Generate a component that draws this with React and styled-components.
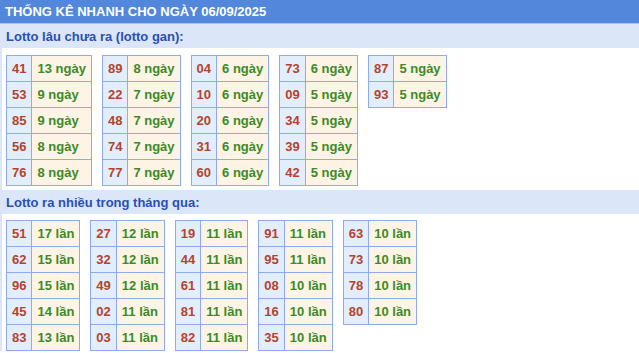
import React from "react";
import styled, { createGlobalStyle } from "styled-components";

const Global = createGlobalStyle`
  html, body { margin: 0; padding: 0; background: #fff; }
  body { font-family: "Liberation Sans", Arial, sans-serif; overflow: hidden; }
`;

const Wrap = styled.div`
  width: 639px;
  border-left: 2px solid #dbe7f8;
  box-sizing: border-box;
`;

const Title = styled.div`
  height: 23px;
  line-height: 23px;
  background: #5287dc;
  color: #fff;
  font-weight: bold;
  font-size: 13px;
  border-bottom: 1px solid #a9c3ee;
  margin-left: -2px;
  padding-left: 5px;
`;

const SectionTitle = styled.div`
  height: 24px;
  line-height: 25px;
  background: #dbe7f9;
  color: #2a4fb3;
  font-weight: bold;
  font-size: 13px;
  padding-left: 4px;
  margin-top: ${(p) => p.$top || 0}px;
`;

const Tables = styled.div`
  display: flex;
  align-items: flex-start;
  gap: ${(p) => p.$gap}px;
  padding: ${(p) => p.$pt}px 4px 0;
`;

const Table = styled.table`
  border-collapse: collapse;
  font-size: 13px;
  font-weight: bold;
`;

const Num = styled.td`
  border: 1px solid #8eabf1;
  background: #e3eefc;
  color: #b5432b;
  height: 25px;
  padding: 0 5px;
  line-height: 15px;
`;

const Val = styled.td`
  border: 1px solid #8eabf1;
  background: #fdf4e5;
  color: #3c8a27;
  height: 25px;
  padding: 0 5px;
  line-height: 15px;
  white-space: nowrap;
`;

const gan = [
  [["41", 13], ["53", 9], ["85", 9], ["56", 8], ["76", 8]],
  [["89", 8], ["22", 7], ["48", 7], ["74", 7], ["77", 7]],
  [["04", 6], ["10", 6], ["20", 6], ["31", 6], ["60", 6]],
  [["73", 6], ["09", 5], ["34", 5], ["39", 5], ["42", 5]],
  [["87", 5], ["93", 5]],
];

const nhieu = [
  [["51", 17], ["62", 15], ["96", 15], ["45", 14], ["83", 13]],
  [["27", 12], ["32", 12], ["49", 12], ["02", 11], ["03", 11]],
  [["19", 11], ["44", 11], ["61", 11], ["81", 11], ["82", 11]],
  [["91", 11], ["95", 11], ["08", 10], ["16", 10], ["35", 10]],
  [["63", 10], ["73", 10], ["78", 10], ["80", 10]],
];

function Block({ data, unit }) {
  return (
    <Table>
      <tbody>
        {data.map(([n, c]) => (
          <tr key={n}>
            <Num>{n}</Num>
            <Val>
              {c} {unit}
            </Val>
          </tr>
        ))}
      </tbody>
    </Table>
  );
}

export default function App() {
  return (
    <>
      <Global />
      <Wrap>
        <Title>THỐNG KÊ NHANH CHO NGÀY 06/09/2025</Title>
        <SectionTitle>Lotto lâu chưa ra (lotto gan):</SectionTitle>
        <Tables $gap={10} $pt={7}>
          {gan.map((d, i) => (
            <Block key={i} data={d} unit="ngày" />
          ))}
        </Tables>
        <SectionTitle $top={4}>Lotto ra nhiều trong tháng qua:</SectionTitle>
        <Tables $gap={10} $pt={6}>
          {nhieu.map((d, i) => (
            <Block key={i} data={d} unit="lần" />
          ))}
        </Tables>
      </Wrap>
    </>
  );
}
